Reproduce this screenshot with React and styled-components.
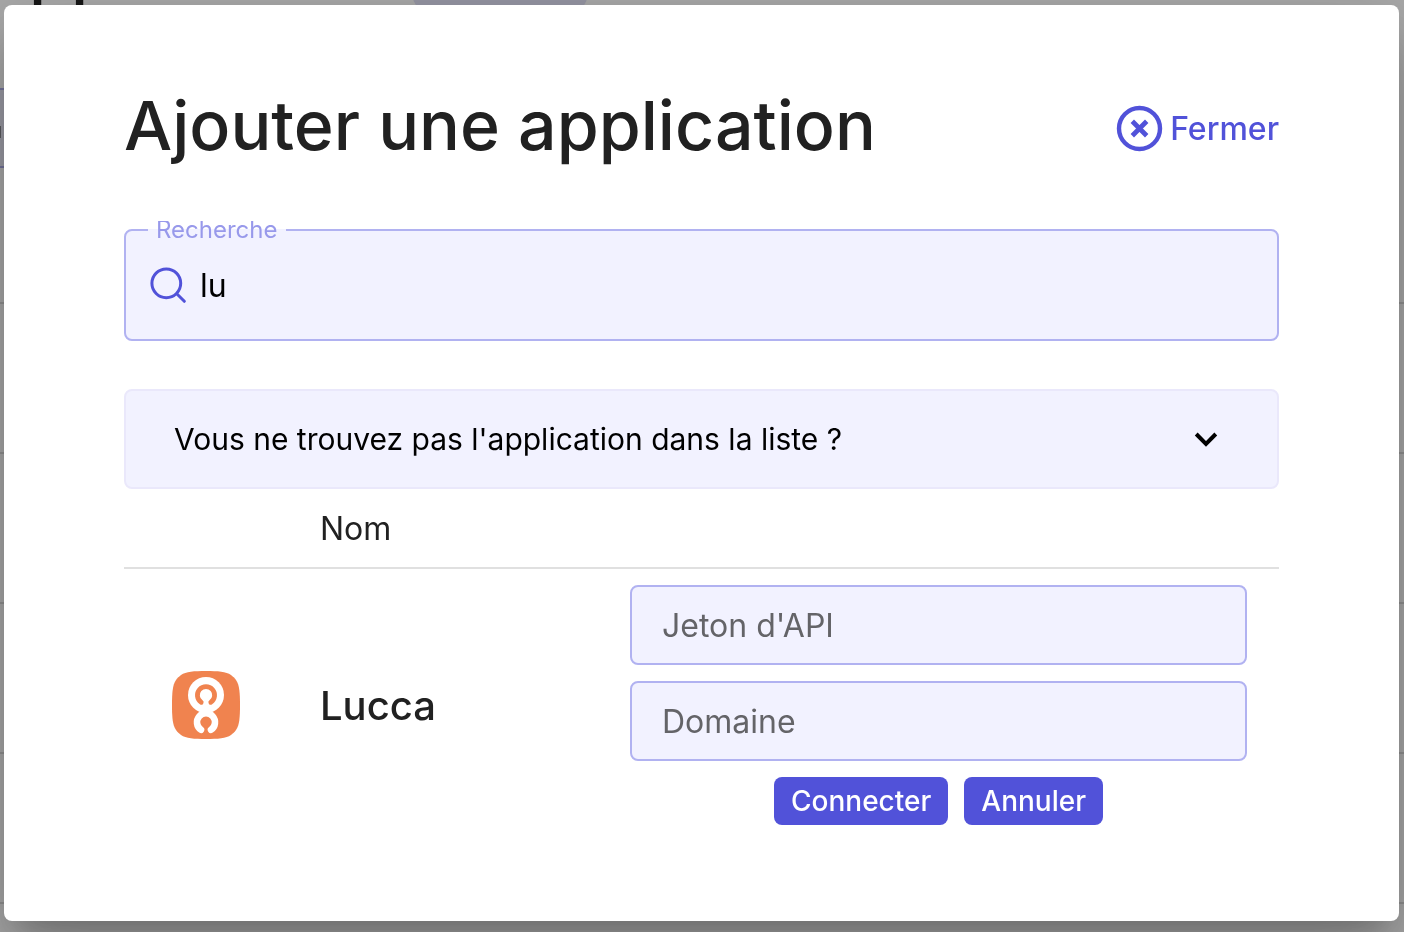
import { useState } from 'react';
import styled, { createGlobalStyle } from 'styled-components';

const colors = {
  primary: '#5152d9',
  primaryBorder: '#b1b2f1',
  label: '#9899eb',
  field: '#f2f2ff',
  text: '#212121',
};

const GlobalStyle = createGlobalStyle`
  *, *::before, *::after {
    box-sizing: border-box;
  }
  body {
    margin: 0;
    background: #aaaaaa;
    color: ${colors.text};
    font-family: Inter, "Liberation Sans", sans-serif;
  }
  button, input {
    font-family: inherit;
  }
`;

// dimmed page that stays behind the dialog
const Backdrop = styled.div`
  position: fixed;
  inset: 0;
  overflow: hidden;
`;

const BackdropHeader = styled.div`
  display: flex;
  height: 88px;
  padding-left: 29px;
`;

const BackdropTitle = styled.div`
  width: 383px;
  margin-top: -70px;
  color: #161616;
  font-size: 68px;
  font-weight: 500;
  line-height: 80px;
`;

const BackdropPill = styled.div`
  width: 176px;
  height: 48px;
  margin-top: -32px;
  border-radius: 24px;
  background: #9696a4;
`;

const BackdropField = styled.div`
  width: 50%;
  height: 80px;
  padding-top: 36px;
  border: 2px solid #74749c;
  border-width: 2px 0;
  background: #9c9ca6;

  &::before {
    content: '';
    display: block;
    width: 1px;
    height: 12px;
    background: #5c5c60;
  }
`;

const BackdropRow = styled.div`
  height: ${({ $first }) => ($first ? '136px' : '150px')};
  border-bottom: 2px solid #929292;
`;

const Screen = styled.div`
  position: relative;
  display: flex;
  min-height: 100vh;
  padding: 5px 5px 11px 4px;
`;

const Dialog = styled.div`
  flex: 1;
  padding: 80px 120px;
  border-radius: 8px;
  background: #fff;
  box-shadow:
    0 22px 30px -14px rgba(0, 0, 0, 0.2),
    0 48px 76px 6px rgba(0, 0, 0, 0.14),
    0 18px 92px 16px rgba(0, 0, 0, 0.12);
`;

const Header = styled.header`
  display: flex;
  align-items: center;
  justify-content: space-between;
  margin-bottom: 56px;
`;

const Title = styled.h1`
  margin: 0;
  font-size: 68px;
  font-weight: 500;
  line-height: 80px;
`;

const CloseButton = styled.button`
  display: flex;
  align-items: center;
  gap: 6px;
  padding: 8px 0 0;
  border: none;
  background: none;
  color: ${colors.primary};
  font-size: 32px;
  font-weight: 500;
  line-height: 40px;
  cursor: pointer;
`;

const SearchField = styled.fieldset`
  min-width: 0;
  height: 120px;
  margin: 0 0 48px;
  padding: 0 24px;
  border: 2px solid ${colors.primaryBorder};
  border-radius: 8px;
  background: ${colors.field};
`;

const SearchLegend = styled.legend`
  height: 18px;
  padding: 0 8px;
  margin-left: -2px;
  overflow: hidden;
  color: ${colors.label};
  font-size: 24px;
  line-height: 18px;
`;

const SearchRow = styled.div`
  display: flex;
  align-items: center;
  gap: 14px;
  height: 92px;
`;

const SearchInput = styled.input`
  flex: 1;
  min-width: 0;
  height: 48px;
  padding: 0;
  border: none;
  outline: none;
  background: transparent;
  color: #000;
  font-size: 32px;
`;

const Accordion = styled.button`
  display: flex;
  align-items: center;
  justify-content: space-between;
  width: 100%;
  height: 100px;
  padding: 0 59px 0 48px;
  border: 2px solid #eae8fb;
  border-radius: 8px;
  background: ${colors.field};
  color: #000;
  font-size: 30px;
  text-align: left;
  cursor: pointer;
`;

const Table = styled.table`
  width: 100%;
  border-collapse: separate;
  border-spacing: 0;
  table-layout: fixed;
`;

const HeadCell = styled.th`
  width: ${({ $width }) => $width || 'auto'};
  height: 80px;
  padding: 0 32px;
  border-bottom: 2px solid #e0e0e0;
  font-size: 32px;
  font-weight: 400;
  text-align: left;
`;

const Cell = styled.td`
  padding: 16px 32px;
  font-size: 40px;
  font-weight: 500;
  text-align: ${({ $align }) => $align || 'left'};
  vertical-align: middle;
`;

const Form = styled.form`
  display: flex;
  flex-direction: column;
  gap: 16px;
`;

const TextInput = styled.input`
  width: 100%;
  height: 80px;
  padding: 0 30px;
  border: 2px solid ${colors.primaryBorder};
  border-radius: 8px;
  outline: none;
  background: ${colors.field};
  color: #000;
  font-size: 32px;

  &::placeholder {
    color: #646468;
    opacity: 1;
  }
`;

const Actions = styled.div`
  display: flex;
  justify-content: center;
  gap: 16px;
`;

const ActionButton = styled.button`
  height: 48px;
  padding: 0 17px;
  border: none;
  border-radius: 8px;
  background: ${colors.primary};
  color: #fff;
  font-size: 28px;
  font-weight: 500;
  cursor: pointer;
`;

const Block = styled.svg`
  display: inline-block;
  flex: none;
  vertical-align: middle;
`;

const CloseIcon = () => (
  <Block width="48" height="48" viewBox="0 0 48 48" fill="none" stroke="currentColor" aria-hidden="true">
    <circle cx="23.5" cy="23.5" r="20.5" strokeWidth="4.4" />
    <path d="M16.3 16.3 30.7 30.7M30.7 16.3 16.3 30.7" strokeWidth="4.8" />
  </Block>
);

const SearchIcon = () => (
  <Block width="36" height="36" viewBox="0 0 36 36" fill="none" stroke={colors.primary} strokeWidth="3" strokeLinecap="round" aria-hidden="true">
    <circle cx="16.3" cy="16.3" r="14.4" />
    <path d="m27 27 7.3 7.3" />
  </Block>
);

const ChevronIcon = () => (
  <Block width="24" height="24" viewBox="0 0 24 24" fill="none" stroke="currentColor" strokeWidth="4" aria-hidden="true">
    <path d="m2.2 7 9.800 9.800 9.800-9.800" />
  </Block>
);

const LuccaLogo = () => (
  <Block width="68" height="68" viewBox="0 0 68 68" fill="none" strokeLinecap="round" role="img" aria-label="Lucca">
    <path d="M34 0C46 0 54 .5 59 4c2 1.500 3.500 3 5 5 3.500 5 4 13 4 25s-.5 20-4 25c-1.500 2-3 3.500-5 5-5 3.500-13 4-25 4s-20-.5-25-4c-2-1.500-3.500-3-5-5-3.500-5-4-13-4-25s.5-20 4-25c1.500-2 3-3.500 5-5 5-3.500 13-4 25-4Z" fill="#f0834f" />
    <circle cx="34" cy="24" r="18" fill="#fff" />
    <path d="M29.2 31.3a8.6 8.6 0 1 1 9.6 0" stroke="#f0834f" strokeWidth="4.8" />
    <path d="M29 58.8a9 9 0 1 1 10 0" stroke="#fff" strokeWidth="6.6" />
  </Block>
);

function App() {
  const [search, setSearch] = useState('lu');
  const [open, setOpen] = useState(false);

  return (
    <>
      <GlobalStyle />
      <Backdrop aria-hidden="true">
        <BackdropHeader>
          <BackdropTitle>pp</BackdropTitle>
          <BackdropPill />
        </BackdropHeader>
        <BackdropField />
        <BackdropRow $first />
        <BackdropRow />
        <BackdropRow />
        <BackdropRow />
        <BackdropRow />
      </Backdrop>
      <Screen>
        <Dialog role="dialog" aria-labelledby="dialog-title">
          <Header>
            <Title id="dialog-title">Ajouter une application</Title>
            <CloseButton type="button">
              <CloseIcon />
              Fermer
            </CloseButton>
          </Header>
          <SearchField>
            <SearchLegend>
              <label htmlFor="search">Recherche</label>
            </SearchLegend>
            <SearchRow>
              <SearchIcon />
              <SearchInput id="search" value={search} onChange={(e) => setSearch(e.target.value)} />
            </SearchRow>
          </SearchField>
          <Accordion type="button" aria-expanded={open} onClick={() => setOpen(!open)}>
            Vous ne trouvez pas l&apos;application dans la liste ?
            <ChevronIcon />
          </Accordion>
          <Table>
            <thead>
              <tr>
                <HeadCell $width="164px" />
                <HeadCell $width="310px">Nom</HeadCell>
                <HeadCell />
              </tr>
            </thead>
            <tbody>
              <tr>
                <Cell $align="center"><LuccaLogo /></Cell>
                <Cell>Lucca</Cell>
                <Cell>
                  <Form onSubmit={(e) => e.preventDefault()}>
                    <TextInput aria-label="Jeton d'API" placeholder="Jeton d'API" />
                    <TextInput aria-label="Domaine" placeholder="Domaine" />
                    <Actions>
                      <ActionButton type="submit">Connecter</ActionButton>
                      <ActionButton type="button">Annuler</ActionButton>
                    </Actions>
                  </Form>
                </Cell>
              </tr>
            </tbody>
          </Table>
        </Dialog>
      </Screen>
    </>
  );
}

export default App;
